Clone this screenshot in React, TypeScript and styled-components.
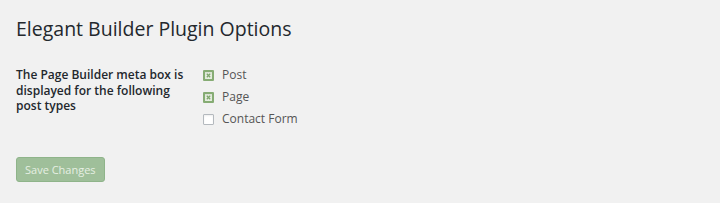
import styled, { createGlobalStyle } from "styled-components";

const Global = createGlobalStyle`
  body {
    margin: 0;
    background: #f1f1f1;
    font-family: "Open Sans", sans-serif;
    color: #444;
  }
`;

const Wrap = styled.div`
  padding: 14px 16px 0 16px;
`;

const Title = styled.h2`
  margin: 0;
  font-size: 19.5px;
  font-weight: 400;
  line-height: 29px;
  color: #23282d;
`;

const Row = styled.div`
  display: flex;
  margin-top: 24px;
`;

const Label = styled.div`
  width: 172px;
  margin-right: 15px;
  font-size: 12px;
  font-weight: 600;
  line-height: 15.5px;
  color: #23282d;
`;

const Options = styled.div`
  display: flex;
  flex-direction: column;
  gap: 6px;
`;

const Option = styled.label`
  display: flex;
  align-items: center;
  gap: 8px;
  font-size: 12px;
  line-height: 16px;
  color: #555;
`;

const Box = styled.span<{ $on?: boolean }>`
  width: 11px;
  height: 11px;
  box-sizing: border-box;
  border-radius: 1px;
  display: flex;
  align-items: center;
  justify-content: center;
  background: ${(p) => (p.$on ? "#e6efe0" : "#fff")};
  border: ${(p) => (p.$on ? "2px solid #86ac74" : "1px solid #b4b9be")};
  box-shadow: inset 0 1px 2px rgba(0, 0, 0, 0.07);
`;

const Button = styled.button`
  margin-top: 30px;
  height: 25px;
  padding: 0 8px;
  background: #9fbf9a;
  border: 1px solid #8fb48a;
  border-radius: 3px;
  color: #e6efe3;
  font-family: "Open Sans", sans-serif;
  font-size: 11px;
`;

const Check = () => (
  <svg width="5" height="5" viewBox="0 0 5 5">
    <path d="M0.8 0.8L4.2 4.2M4.2 0.8L0.8 4.2" stroke="#7fa66d" strokeWidth="1.3" />
  </svg>
);

const items = [
  { name: "Post", on: true },
  { name: "Page", on: true },
  { name: "Contact Form", on: false },
];

export default function App() {
  return (
    <>
      <Global />
      <Wrap>
        <Title>Elegant Builder Plugin Options</Title>
        <Row>
          <Label>
            The Page Builder meta box is displayed for the following post types
          </Label>
          <Options>
            {items.map((it) => (
              <Option key={it.name}>
                <Box $on={it.on}>{it.on && <Check />}</Box>
                {it.name}
              </Option>
            ))}
          </Options>
        </Row>
        <Button>Save Changes</Button>
      </Wrap>
    </>
  );
}
